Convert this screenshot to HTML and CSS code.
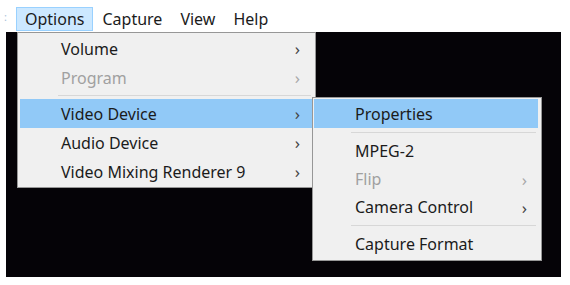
FILE: index.html
```html
<!DOCTYPE html>
<html lang="en">
<head>
    <meta charset="UTF-8">
    <title>Options Menu</title>
    <link rel="stylesheet" href="styles.css">
</head>
<body>

    <div class="menubar">
        <span class="grip">:</span>
        <div class="menubar-item open">Options</div>
        <div class="menubar-item">Capture</div>
        <div class="menubar-item">View</div>
        <div class="menubar-item">Help</div>
    </div>

    <div class="screen">
        <!-- Options dropdown -->
        <div class="menu main-menu">
            <div class="item"><span>Volume</span><span class="arrow">&rsaquo;</span></div>
            <div class="item disabled"><span>Program</span><span class="arrow">&rsaquo;</span></div>
            <div class="sep"></div>
            <div class="item active"><span>Video Device</span><span class="arrow">&rsaquo;</span></div>
            <div class="item"><span>Audio Device</span><span class="arrow">&rsaquo;</span></div>
            <div class="item"><span>Video Mixing Renderer 9</span><span class="arrow">&rsaquo;</span></div>
        </div>

        <!-- Video Device submenu -->
        <div class="menu sub-menu">
            <div class="item active first"><span>Properties</span></div>
            <div class="sep"></div>
            <div class="item"><span>MPEG-2</span></div>
            <div class="item disabled"><span>Flip</span><span class="arrow">&rsaquo;</span></div>
            <div class="item"><span>Camera Control</span><span class="arrow">&rsaquo;</span></div>
            <div class="sep"></div>
            <div class="item"><span>Capture Format</span></div>
        </div>
    </div>

</body>
</html>
```

FILE: styles.css
```css
* {
    box-sizing: border-box;
    margin: 0;
    padding: 0;
}

body {
    font-family: "Noto Sans", "Open Sans", sans-serif;
    font-size: 16px;
    color: #1b1b1b;
    background: #fff;
    width: 570px;
    height: 285px;
    overflow: hidden;
}

.menubar {
    display: flex;
    align-items: center;
    height: 32px;
    padding: 7px 0 1px 16px;
    position: relative;
}

.grip {
    position: absolute;
    left: 4px;
    top: 9px;
    font-size: 11px;
    color: #a9c2da;
}

.menubar-item {
    height: 24px;
    line-height: 22px;
    padding: 0 8px;
    border: 1px solid transparent;
}

.menubar-item.open {
    background: #cce8ff;
    border-color: #99d1ff;
}

.screen {
    position: relative;
    margin-left: 6px;
    width: 555px;
    height: 245px;
    background: #050307;
}

.menu {
    position: absolute;
    background: #f0f0f0;
    border: 1px solid #979797;
    padding: 2px;
}

.main-menu {
    left: 11px;
    top: 0;
    width: 299px;
    padding-top: 1px;
    padding-bottom: 1px;
}

.sub-menu {
    left: 306px;
    top: 65px;
    width: 230px;
    padding: 1px 3px 2px 1px;
}

.item {
    display: flex;
    justify-content: space-between;
    align-items: center;
    height: 29px;
    padding: 0 13px 0 41px;
}

.sub-menu .item {
    height: 28px;
    padding: 0 11px 0 41px;
}

.sub-menu .item.first {
    height: 29px;
}

.item.active {
    background: #91c9f7;
}

.item.disabled {
    color: #a0a0a0;
}

.arrow {
    font-size: 17px;
    color: #444;
}

.item.disabled .arrow {
    color: #a8a8a8;
}

.sep {
    height: 1px;
    margin: 3px 2px 3px 38px;
    background: #d7d7d7;
}

.sub-menu .sep {
    margin: 4px 2px 4px 37px;
}
```
